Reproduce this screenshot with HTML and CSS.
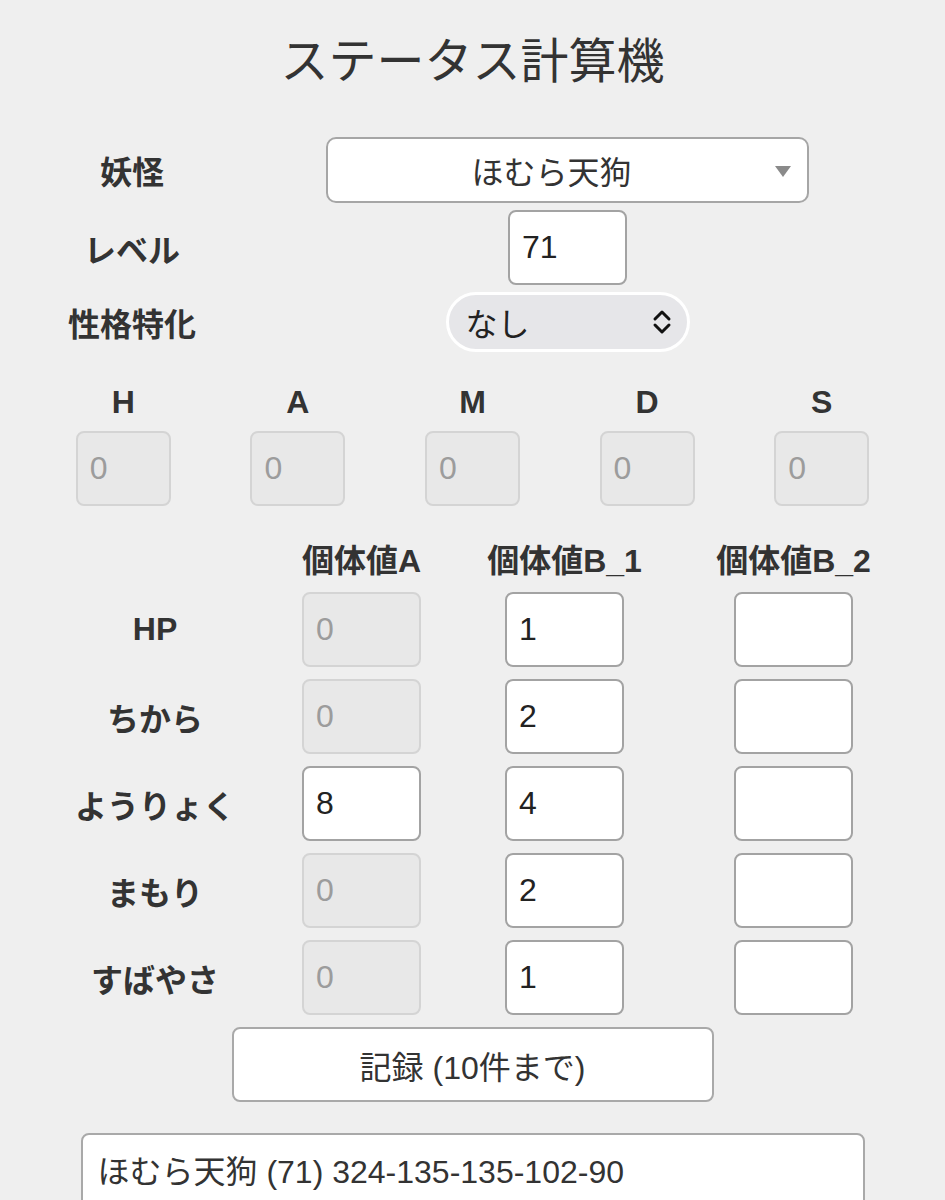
FILE: index.html
```html
<!DOCTYPE html>
<html lang="ja">
<head>
<meta charset="utf-8">
<title>ステータス計算機</title>
<link rel="stylesheet" href="styles.css">
</head>
<body>
<main class="page">
  <h1 class="title">ステータス計算機</h1>

  <div class="form">
    <div class="label">妖怪</div>
    <div class="field">
      <div class="select">
        <span class="select-text">ほむら天狗</span>
        <svg class="select-arrow" width="16" height="11" viewBox="0 0 16 11"><polygon points="0,0 16,0 8,11" fill="#8a8a8a"/></svg>
      </div>
    </div>
    <div class="label">レベル</div>
    <div class="field"><input class="num level" type="text" value="71"></div>
    <div class="label">性格特化</div>
    <div class="field">
      <div class="pill">
        <span class="pill-text">なし</span>
        <svg class="pill-chevron" width="20" height="26" viewBox="0 0 20 26"><polyline points="3,10 10,3 17,10" fill="none" stroke="#111" stroke-width="3" stroke-linecap="round" stroke-linejoin="round"/><polyline points="3,16 10,23 17,16" fill="none" stroke="#111" stroke-width="3" stroke-linecap="round" stroke-linejoin="round"/></svg>
      </div>
    </div>
  </div>

  <div class="base">
    <div class="stat"><div class="stat-label">H</div><input class="num small off" type="text" value="0" disabled></div>
    <div class="stat"><div class="stat-label">A</div><input class="num small off" type="text" value="0" disabled></div>
    <div class="stat"><div class="stat-label">M</div><input class="num small off" type="text" value="0" disabled></div>
    <div class="stat"><div class="stat-label">D</div><input class="num small off" type="text" value="0" disabled></div>
    <div class="stat"><div class="stat-label">S</div><input class="num small off" type="text" value="0" disabled></div>
  </div>

  <div class="iv">
    <div class="iv-head"></div>
    <div class="iv-head">個体値A</div>
    <div class="iv-head">個体値B_1</div>
    <div class="iv-head">個体値B_2</div>

    <div class="iv-label">HP</div>
    <div class="iv-cell"><input class="num off" type="text" value="0" disabled></div>
    <div class="iv-cell"><input class="num" type="text" value="1"></div>
    <div class="iv-cell"><input class="num" type="text" value=""></div>

    <div class="iv-label">ちから</div>
    <div class="iv-cell"><input class="num off" type="text" value="0" disabled></div>
    <div class="iv-cell"><input class="num" type="text" value="2"></div>
    <div class="iv-cell"><input class="num" type="text" value=""></div>

    <div class="iv-label">ようりょく</div>
    <div class="iv-cell"><input class="num" type="text" value="8"></div>
    <div class="iv-cell"><input class="num" type="text" value="4"></div>
    <div class="iv-cell"><input class="num" type="text" value=""></div>

    <div class="iv-label">まもり</div>
    <div class="iv-cell"><input class="num off" type="text" value="0" disabled></div>
    <div class="iv-cell"><input class="num" type="text" value="2"></div>
    <div class="iv-cell"><input class="num" type="text" value=""></div>

    <div class="iv-label">すばやさ</div>
    <div class="iv-cell"><input class="num off" type="text" value="0" disabled></div>
    <div class="iv-cell"><input class="num" type="text" value="1"></div>
    <div class="iv-cell"><input class="num" type="text" value=""></div>
  </div>

  <div class="actions">
    <button class="record" type="button">記録 (10件まで)</button>
  </div>

  <div class="log">ほむら天狗 (71) 324-135-135-102-90</div>
</main>
</body>
</html>
```

FILE: styles.css
```css
html, body {
  margin: 0;
  padding: 0;
  background: #efefef;
}

body {
  font-family: "Liberation Sans", "Noto Sans CJK JP", sans-serif;
  color: #333;
}

.page {
  width: 945px;
  padding-top: 32px;
}

.title {
  margin: 0;
  height: 60px;
  line-height: 60px;
  font-size: 48px;
  font-weight: 400;
  text-align: center;
  color: #333;
}

/* top form */
.form {
  margin-top: 45px;
  display: grid;
  grid-template-columns: 264px 483px;
  grid-template-rows: 66px 75px 59px;
  column-gap: 62px;
  row-gap: 7px;
}

.label {
  display: flex;
  align-items: center;
  justify-content: center;
  font-size: 32px;
  font-weight: 700;
  color: #333;
}

.field {
  display: flex;
  align-items: center;
  justify-content: center;
}

.select {
  box-sizing: border-box;
  width: 100%;
  height: 66px;
  background: #fff;
  border: 2px solid #a6a6a6;
  border-radius: 10px;
  display: flex;
  align-items: center;
  padding-right: 16px;
}

.select-text {
  flex: 1;
  text-align: center;
  font-size: 32px;
  color: #333;
}

.select-arrow {
  flex: none;
  margin-top: 2px;
}

.num {
  box-sizing: border-box;
  width: 119px;
  height: 75px;
  margin: 0;
  padding: 0 12px;
  background: #fff;
  border: 2px solid #a3a3a3;
  border-radius: 8px;
  font-family: "Liberation Sans", "Noto Sans CJK JP", sans-serif;
  font-size: 32px;
  color: #222;
  outline: none;
}

.num.small {
  width: 95px;
}

.num.off {
  background: #e8e8e8;
  border-color: #d4d4d4;
  color: #9c9c9c;
  -webkit-text-fill-color: #9c9c9c;
  opacity: 1;
}

.pill {
  box-sizing: border-box;
  width: 244px;
  height: 60px;
  background: #e6e6e9;
  border: 3px solid #fff;
  border-radius: 30px;
  display: flex;
  align-items: center;
  justify-content: space-between;
  padding: 0 15px 0 17px;
}

.pill-text {
  font-size: 32px;
  color: #222;
}

/* base stats */
.base {
  margin: 31px 36px 0;
  display: grid;
  grid-template-columns: repeat(5, 1fr);
}

.stat {
  display: flex;
  flex-direction: column;
  align-items: center;
  gap: 9px;
}

.stat-label {
  height: 40px;
  line-height: 40px;
  font-size: 32px;
  font-weight: 700;
  color: #333;
}

/* individual values */
.iv {
  margin: 37px 0 0 52px;
  display: grid;
  grid-template-columns: 206px 207px 199px 259px;
  grid-template-rows: 37px repeat(5, 75px);
  row-gap: 12px;
}

.iv-head {
  line-height: 37px;
  text-align: center;
  font-size: 32px;
  font-weight: 700;
  color: #333;
  white-space: nowrap;
}

.iv-label {
  display: flex;
  align-items: center;
  justify-content: center;
  font-size: 32px;
  font-weight: 700;
  color: #333;
  white-space: nowrap;
}

.iv-cell {
  display: flex;
  align-items: center;
  justify-content: center;
}

/* actions */
.actions {
  margin-top: 12px;
  display: flex;
  justify-content: center;
}

.record {
  box-sizing: border-box;
  width: 482px;
  height: 75px;
  background: #fff;
  border: 2px solid #a9a9a9;
  border-radius: 8px;
  font-family: "Liberation Sans", "Noto Sans CJK JP", sans-serif;
  font-size: 32px;
  color: #333;
}

.log {
  box-sizing: border-box;
  width: 784px;
  height: 110px;
  margin: 31px auto 0;
  padding: 17px 15px 0;
  background: #fff;
  border: 2px solid #a9a9a9;
  border-radius: 8px;
  font-size: 32px;
  line-height: 40px;
  color: #333;
}
```
